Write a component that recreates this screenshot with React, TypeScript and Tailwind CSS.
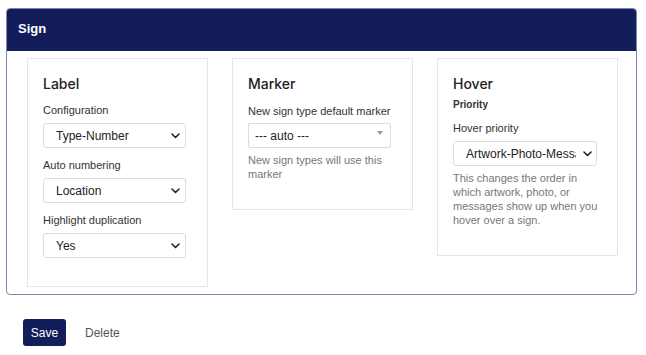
/* Sign settings card */

function Chevron() {
  return (
    <svg width="9" height="6" viewBox="0 0 9 6" className="shrink-0 text-[#222]">
      <path d="M1 1l3.5 3.5L8 1" fill="none" stroke="currentColor" strokeWidth="1.6" strokeLinecap="round" strokeLinejoin="round" />
    </svg>
  )
}

function Select({ value }: { value: string }) {
  return (
    <div className="flex h-[25px] w-[143px] items-center rounded-[3px] border border-[#dcdcdc] bg-white pl-[12px] pr-[5px] text-[12px] text-[#222]">
      <span className="flex-1 overflow-hidden whitespace-nowrap">{value}</span>
      <span className="ml-[4px]"><Chevron /></span>
    </div>
  )
}

function Field({ label, value, first }: { label: string; value: string; first?: boolean }) {
  return (
    <div className={first ? 'mt-[8px]' : 'mt-[9px]'}>
      <div className="mb-[5px] text-[11px] leading-[16px] text-[#333]">{label}</div>
      <Select value={value} />
    </div>
  )
}

function Panel({ title, children }: { title: string; children: React.ReactNode }) {
  return (
    <div className="border border-[#e6e6e6] px-[15px] pt-[15px] pb-[28px]">
      <div className="text-[14px] leading-[20px] font-medium text-[#222]" style={{ fontFamily: 'Inter, sans-serif' }}>{title}</div>
      {children}
    </div>
  )
}

export default function App() {
  return (
    <div className="min-h-[355px] bg-white pt-[8px] pl-[6px]" style={{ fontFamily: '"Liberation Sans", Arial, sans-serif' }}>
      <div className="w-[631px] overflow-hidden rounded-[4px] border border-[#7f86aa]">
        <div className="flex h-[42px] items-center bg-[#131d5a] pb-[2px] pl-[11px] text-[13px] font-bold text-white">
          Sign
        </div>
        <div className="grid grid-cols-[181px_181px_181px] items-start gap-x-[24px] px-[20px] pt-[7px] pb-[7px]">
          <Panel title="Label">
            <Field first label="Configuration" value="Type-Number" />
            <Field label="Auto numbering" value="Location" />
            <Field label="Highlight duplication" value="Yes" />
          </Panel>

          <Panel title="Marker">
            <div className="mt-[9px] mb-[4px] text-[11px] leading-[16px] text-[#333]">New sign type default marker</div>
            <div className="flex h-[25px] w-[143px] items-center justify-between rounded-[2px] border border-[#dcdcdc] bg-white pl-[6px] pr-[7px] text-[12px] text-[#222]">
              <span>--- auto ---</span>
              <span className="mb-[6px] h-0 w-0 border-x-[3px] border-t-[4px] border-x-transparent border-t-[#999]" />
            </div>
            <div className="mt-[5px] text-[11px] leading-[14px] text-[#777]">New sign types will use this marker</div>
          </Panel>

          <Panel title="Hover">
            <div className="mt-[4px] text-[10px] leading-[14px] font-bold text-[#333]">Priority</div>
            <div className="mt-[8px] mb-[5px] text-[11px] leading-[16px] text-[#333]">Hover priority</div>
            <div className="flex h-[25px] w-[144px] items-center rounded-[3px] border border-[#dcdcdc] bg-white pl-[12px] pr-[4px] text-[12px] text-[#222]">
              <span className="w-[110px] overflow-hidden whitespace-nowrap">Artwork-Photo-Message</span>
              <span className="ml-auto"><Chevron /></span>
            </div>
            <div className="mt-[5px] text-[11px] leading-[14px] text-[#777]">
              This changes the order in which artwork, photo, or messages show up when you hover over a sign.
            </div>
          </Panel>
        </div>
      </div>

      <div className="mt-[24px] flex items-center pl-[17px]">
        <button className="h-[27px] w-[43px] rounded-[3px] bg-[#131d5a] text-[12px] text-white">Save</button>
        <span className="ml-[19px] text-[12px] text-[#555]">Delete</span>
      </div>
    </div>
  )
}
